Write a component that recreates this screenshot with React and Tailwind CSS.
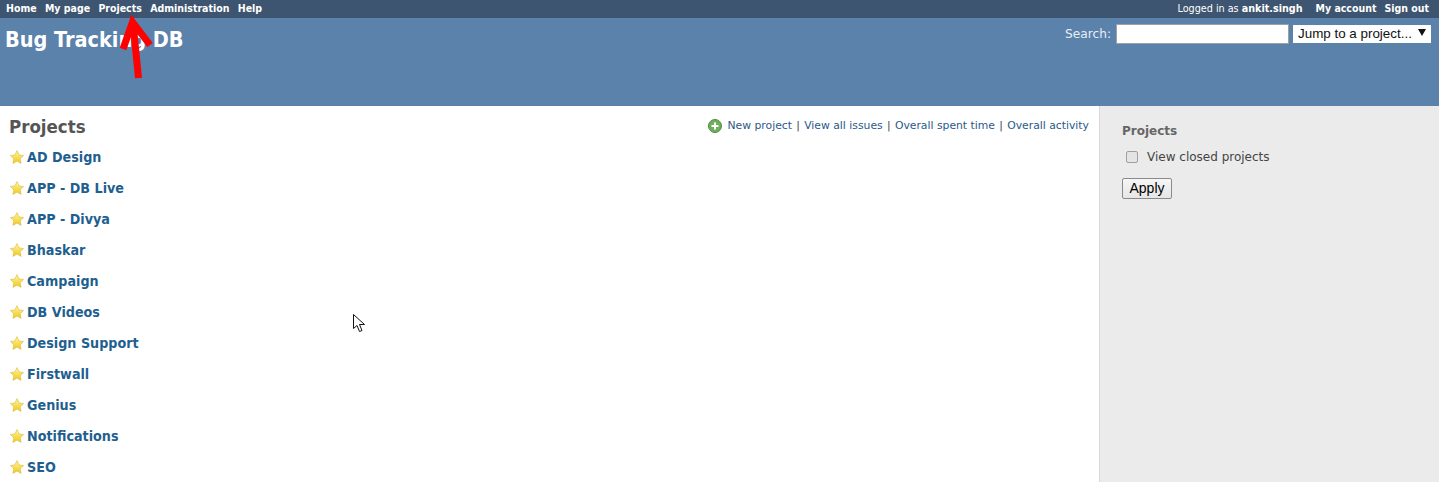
const font = { fontFamily: '"DejaVu Sans", Verdana, sans-serif' };
const cond = { fontFamily: '"DejaVu Sans Condensed", "DejaVu Sans", Verdana, sans-serif' };

const projects = ['AD Design', 'APP - DB Live', 'APP - Divya', 'Bhaskar', 'Campaign', 'DB Videos', 'Design Support', 'Firstwall', 'Genius', 'Notifications', 'SEO'];

function Star() {
  return (
    <svg width="14" height="14" viewBox="0 0 14 14" className="relative -top-[1px] shrink-0">
      <defs>
        <linearGradient id="st" x1="0" y1="0" x2="0" y2="1">
          <stop offset="0" stopColor="#fff7a0" />
          <stop offset="1" stopColor="#f0c818" />
        </linearGradient>
      </defs>
      <path d="M7 .6l2 4.3 4.6.6-3.4 3.2.9 4.7L7 11.1l-4.1 2.3.9-4.7L.4 5.5 5 4.9z" fill="url(#st)" stroke="#d8b83e" strokeWidth="0.6" />
    </svg>
  );
}

export default function App() {
  return (
    <div style={font} className="relative h-[482px] w-[1439px] overflow-hidden bg-white">
      <div style={cond} className="flex h-[18px] items-center justify-between bg-[#3d5570] pl-[6px] pr-[10px] text-[10.5px] font-bold text-white">
        <div className="flex gap-[8.3px]">
          <span>Home</span><span>My page</span><span>Projects</span><span>Administration</span><span>Help</span>
        </div>
        <div className="flex">
          <span className="text-[10.7px] font-normal">Logged in as <b>ankit.singh</b></span>
          <span className="ml-[13px]">My account</span>
          <span className="ml-[8px]">Sign out</span>
        </div>
      </div>
      <div className="flex h-[88px] items-start justify-between bg-[#5b82ab] pl-[5px] pr-[8px] text-white">
        <h1 style={cond} className="mt-[7px] text-[21.5px] leading-[30px] font-bold">Bug Tracking DB</h1>
        <div className="mt-[6px] flex items-center text-[12.2px]">
          <span className="mr-[5px] text-[#e6eef6]">Search:</span>
          <div className="h-[20px] w-[173px] border border-[#a0a0a0] bg-white" />
          <div className="ml-[4px] flex h-[18px] w-[138px] items-center justify-between whitespace-nowrap bg-white pl-[5px] pr-[5px] text-[#111]" style={{ fontFamily: '"Liberation Sans", Arial, sans-serif', fontSize: 13.4 }}>
            <span>Jump to a project...</span>
            <svg width="8" height="7" viewBox="0 0 8 7" className="mb-[3px]"><path d="M0 0h8L4 7z" fill="#111" /></svg>
          </div>
        </div>
      </div>
      <div className="flex h-[376px]">
        <main className="w-[1099px] pl-[9px] pr-[10px]">
          <div className="flex items-start justify-between">
            <h2 style={cond} className="mt-[9px] text-[18.5px] leading-[24px] font-bold text-[#555]">Projects</h2>
            <div className="mt-[12px] flex items-center text-[10.8px] leading-[16px] text-[#2a5a8a]">
              <svg width="14" height="14" viewBox="0 0 14 14" className="mr-[5px]">
                <circle cx="7" cy="7" r="6.5" fill="#6fae5c" stroke="#4d8a42" />
                <path d="M7 3.5v7M3.5 7h7" stroke="#fff" strokeWidth="2" />
              </svg>
              <span>New project</span><span className="mx-[4.3px] text-[#444]">|</span>
              <span>View all issues</span><span className="mx-[4.3px] text-[#444]">|</span>
              <span>Overall spent time</span><span className="mx-[4.3px] text-[#444]">|</span>
              <span>Overall activity</span>
            </div>
          </div>
          <ul className="mt-[3px] ml-[1px]">
            {projects.map((p) => (
              <li key={p} style={cond} className="flex h-[31px] items-center gap-[3px] text-[14.2px] font-bold text-[#1f5f8f]">
                <Star /><span>{p}</span>
              </li>
            ))}
          </ul>
        </main>
        <aside className="flex-1 border-l border-[#d8d8d8] bg-[#ebebeb] pl-[22px]">
          <h3 className="mt-[17px] text-[12px] leading-[16px] font-bold text-[#666]">Projects</h3>
          <label className="mt-[10px] flex items-center text-[12px] leading-[16px] text-[#444]">
            <span className="ml-[4px] h-[12px] w-[12px] rounded-[2px] border border-[#a0a0a0] bg-[#e4e4e4]" />
            <span className="ml-[9px]">View closed projects</span>
          </label>
          <button className="mt-[13px] flex h-[21px] w-[50px] items-center justify-center rounded-[2px] border border-[#8a8a8a] bg-gradient-to-b from-[#f6f6f6] to-[#e6e6e6] pb-[1px] text-[14px] text-black" style={{ fontFamily: '"Liberation Sans", Arial, sans-serif' }}>Apply</button>
        </aside>
      </div>
      <svg className="absolute left-[110px] top-[5px]" width="50" height="80" viewBox="0 0 50 80">
        <path d="M23 18 L28.5 73" stroke="#f00" strokeWidth="7" fill="none" />
        <path d="M13 44 L22.5 17 L40 40" stroke="#f00" strokeWidth="7" fill="none" />
      </svg>
      <svg className="absolute left-[353px] top-[314px]" width="13" height="20" viewBox="0 0 13 20">
        <path d="M.5.5v14l3.5-3 2.5 6 2.5-1-2.5-6h5z" fill="#fff" stroke="#111" strokeWidth="1" />
      </svg>
    </div>
  );
}
